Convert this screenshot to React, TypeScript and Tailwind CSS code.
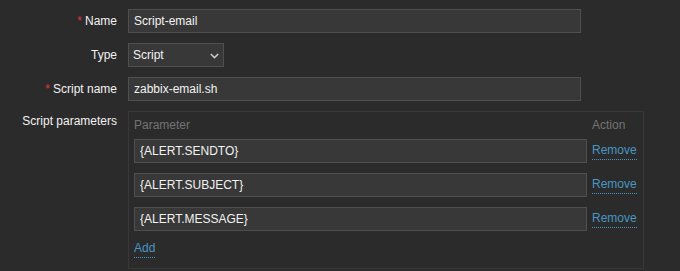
import React from "react";

function Label({ text, required, className = "" }: { text: string; required?: boolean; className?: string }) {
  return (
    <div className={`w-[117px] shrink-0 text-right ${className}`}>
      {required && <span className="text-[#e33734] mr-[3px]">*</span>}
      {text}
    </div>
  );
}

function TextBox({ value, width = "w-[453px]" }: { value: string; width?: string }) {
  return (
    <input
      readOnly
      defaultValue={value}
      className={`${width} h-[24px] bg-[#383838] border border-[#4f4f4f] px-[5px] text-[#f2f2f2] text-[12px] outline-none font-['Liberation_Sans',Arial,sans-serif]`}
    />
  );
}

function Link({ text, className = "" }: { text: string; className?: string }) {
  return (
    <span className={`inline-block text-[#4796c4] leading-[18px] border-b border-dotted border-[#4796c4] ${className}`}>
      {text}
    </span>
  );
}

export default function App() {
  const params = ["{ALERT.SENDTO}", "{ALERT.SUBJECT}", "{ALERT.MESSAGE}"];
  return (
    <div className="w-[680px] h-[271px] overflow-hidden bg-[#2b2b2b] text-[#f2f2f2] text-[12px] font-['Liberation_Sans',Arial,sans-serif] pt-[9px]">
      <div className="flex flex-col gap-[10px]">
        <div className="flex">
          <Label text="Name" required className="leading-[24px]" />
          <div className="ml-[11px]">
            <TextBox value="Script-email" />
          </div>
        </div>
        <div className="flex">
          <Label text="Type" className="leading-[24px]" />
          <div className="ml-[11px] w-[96px] h-[24px] bg-[#383838] border border-[#4f4f4f] pl-[4px] pr-[4px] flex items-center justify-between">
            <span>Script</span>
            <svg width="9" height="6" viewBox="0 0 9 6" className="mt-[1px]">
              <path d="M0.8 1 L4.5 4.6 L8.2 1" fill="none" stroke="#c8c8c8" strokeWidth="1.6" />
            </svg>
          </div>
        </div>
        <div className="flex">
          <Label text="Script name" required className="leading-[24px]" />
          <div className="ml-[11px]">
            <TextBox value="zabbix-email.sh" />
          </div>
        </div>
        <div className="flex">
          <Label text="Script parameters" className="leading-[14px] pt-[3px]" />
          <div className="ml-[11px] w-[516px] border border-[#383838] px-[5px] pt-[6px] pb-[10px]">
            <div className="grid grid-cols-[453px_1fr] gap-x-[5px]">
              <div className="leading-[14px] text-[#737373] mb-[7px]">Parameter</div>
              <div className="leading-[14px] text-[#737373] mb-[7px]">Action</div>
              {params.map((p, i) => (
                <React.Fragment key={p}>
                  <div className={i < params.length - 1 ? "mb-[10px]" : ""}>
                    <TextBox value={p} />
                  </div>
                  <div className={i < params.length - 1 ? "mb-[10px]" : ""}>
                    <Link text="Remove" className="mt-[2px]" />
                  </div>
                </React.Fragment>
              ))}
              <div className="mt-[8px]">
                <Link text="Add" />
              </div>
            </div>
          </div>
        </div>
      </div>
    </div>
  );
}
